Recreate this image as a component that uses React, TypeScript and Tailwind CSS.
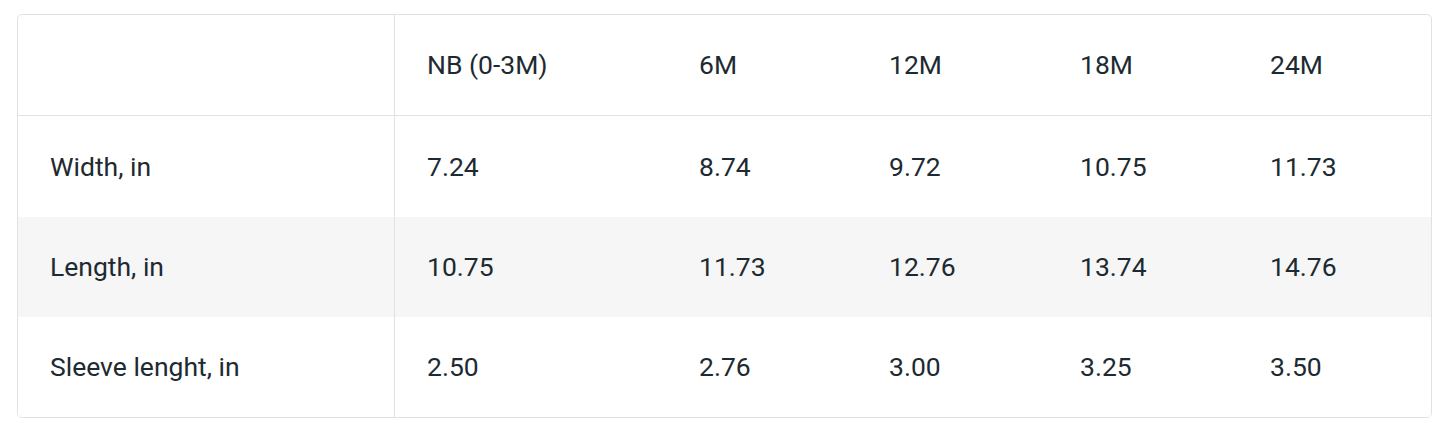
import React from "react";

const header = ["", "NB (0-3M)", "6M", "12M", "18M", "24M"];
const rows = [
  { label: "Width, in", vals: ["7.24", "8.74", "9.72", "10.75", "11.73"], gray: false, h: "h-[101px]" },
  { label: "Length, in", vals: ["10.75", "11.73", "12.76", "13.74", "14.76"], gray: true, h: "h-[100px]" },
  { label: "Sleeve lenght, in", vals: ["2.50", "2.76", "3.00", "3.25", "3.50"], gray: false, h: "h-[100px]" },
];

const grid = "grid grid-cols-[377px_272px_190px_191px_190px_1fr]";

export default function App() {
  return (
    <div
      className="w-[1445px] h-[437px] bg-white pl-[17px] pt-[14px] pr-[13px]"
      style={{ fontFamily: "Roboto, 'Liberation Sans', sans-serif" }}
    >
      <div className="border border-[#e2e2e2] rounded-[5px] overflow-hidden text-[26.5px] text-[#1d2a31]">
        <div className={`${grid} h-[101px] border-b border-[#e2e2e2]`}>
          {header.map((h, i) => (
            <div
              key={i}
              className={`flex items-center pl-[32px] ${i === 0 ? "border-r border-[#e2e2e2]" : ""}`}
            >
              {h}
            </div>
          ))}
        </div>
        {rows.map((r, ri) => (
          <div key={ri} className={`${grid} ${r.h} ${r.gray ? "bg-[#f6f6f6]" : "bg-white"}`}>
            <div className="flex items-center pl-[32px] border-r border-[#e2e2e2]">{r.label}</div>
            {r.vals.map((v, vi) => (
              <div key={vi} className="flex items-center pl-[32px]">
                {v}
              </div>
            ))}
          </div>
        ))}
      </div>
    </div>
  );
}
